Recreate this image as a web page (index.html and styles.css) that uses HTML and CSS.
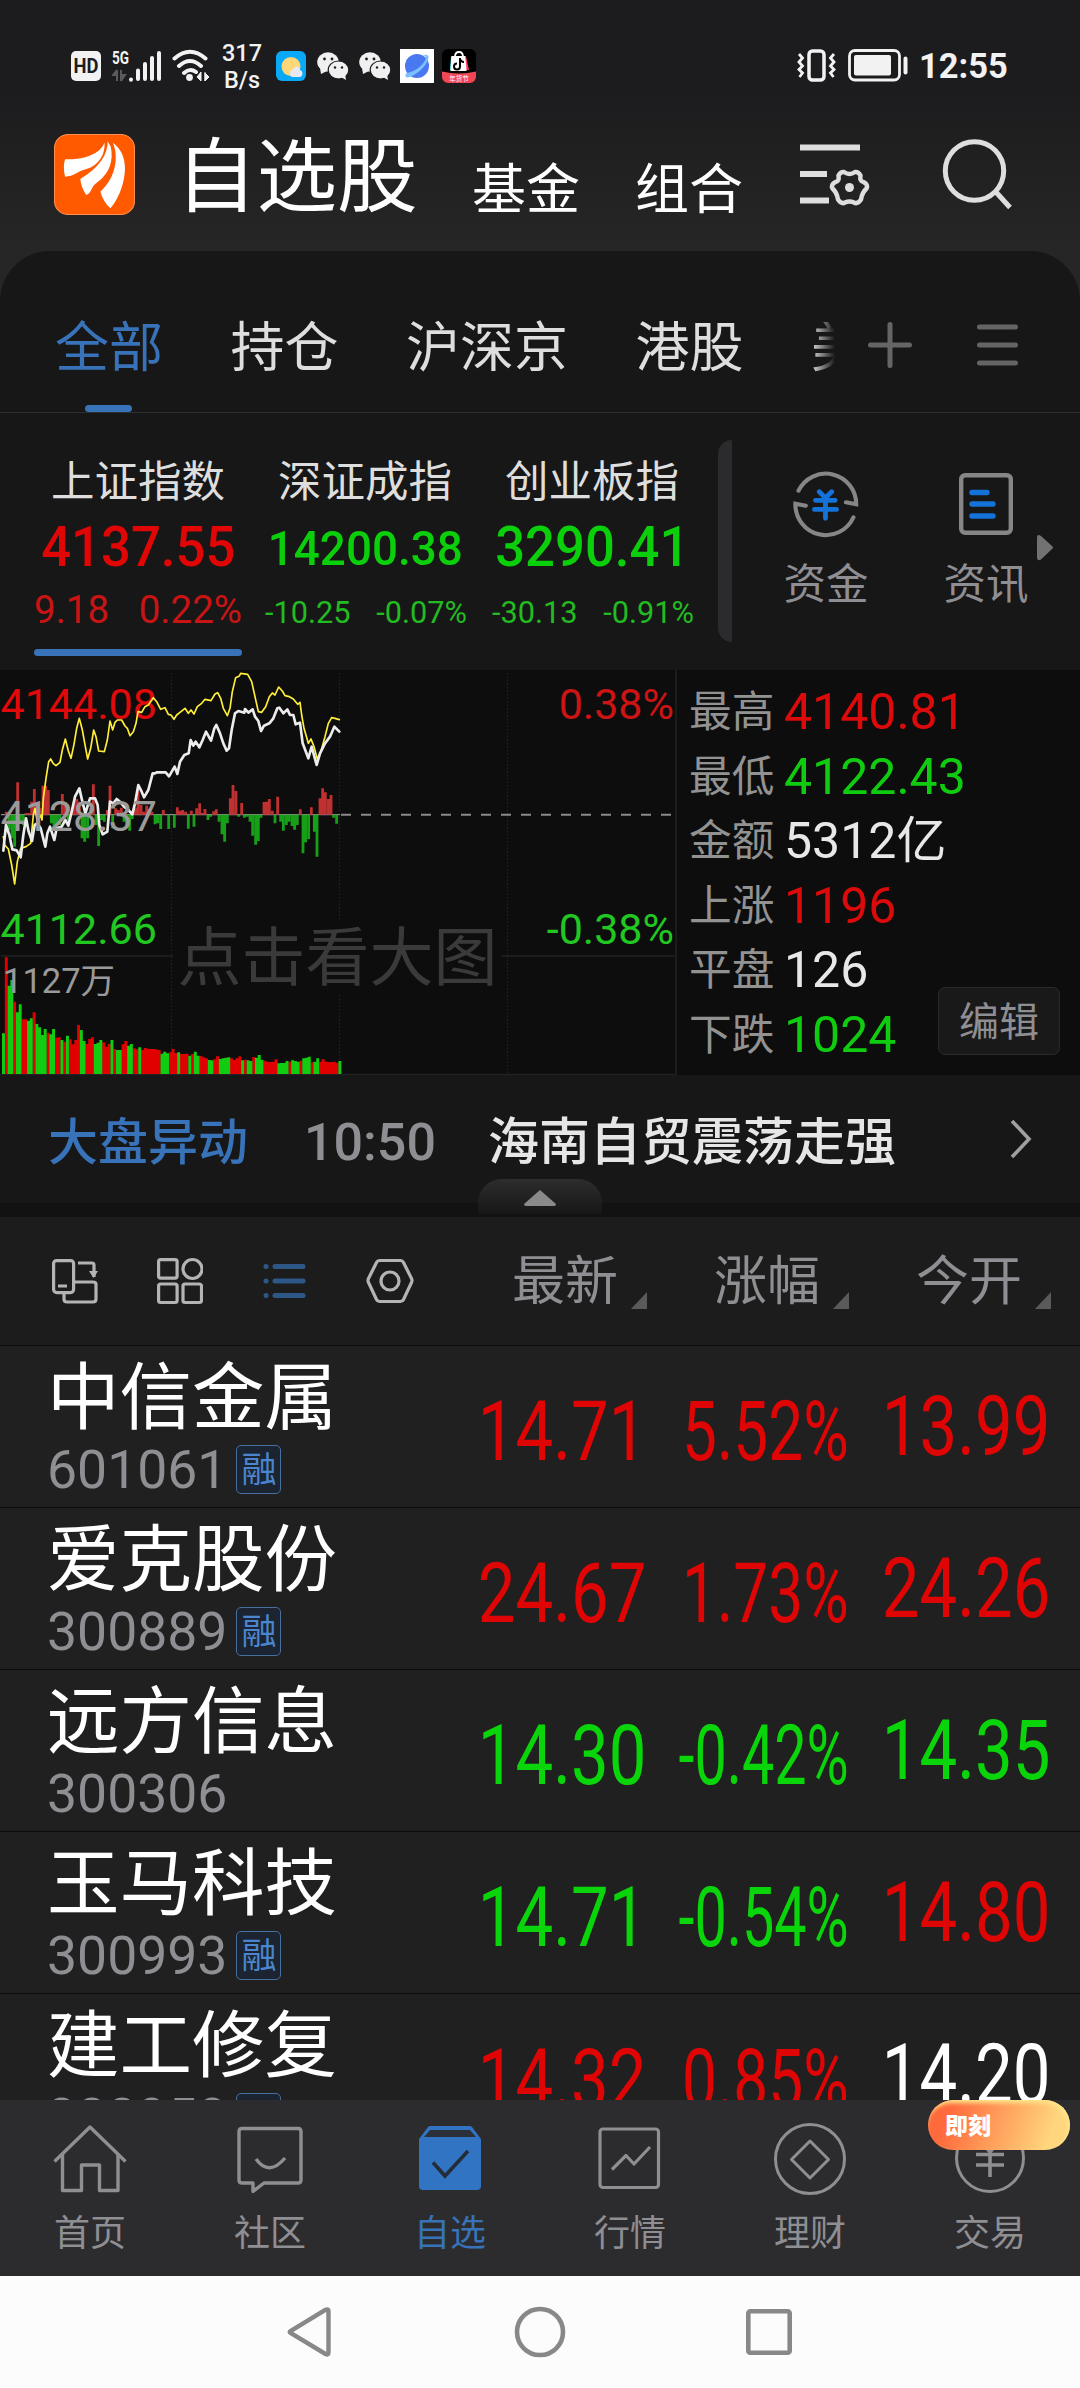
FILE: index.html
```html
<!DOCTYPE html>
<html lang="zh-CN">
<head>
<meta charset="utf-8">
<title>自选股</title>
<link rel="stylesheet" href="styles.css">
</head>
<body>
<div class="top">
  <div class="status">
    <svg class="s-hd" width="30" height="30" viewBox="0 0 30 30"><rect width="30" height="30" rx="5" fill="#f2f2f2"/><text x="15" y="22" font-size="19.5" font-weight="700" text-anchor="middle" fill="#1c1c1e" textLength="25" lengthAdjust="spacingAndGlyphs">HD</text></svg>
    <svg class="s-signal" width="50" height="32" viewBox="0 0 50 32"><text x="0" y="14" font-size="18.5" font-weight="700" fill="#f2f2f2" textLength="17" lengthAdjust="spacingAndGlyphs">5G</text><path d="M5 20v11M9 20v11M5 20l-4 5h4M9 31l4-6h-4" stroke="#5a5a5c" stroke-width="2" fill="#5a5a5c"/><g stroke="#f2f2f2" stroke-width="4" stroke-linecap="round"><path d="M19 29.5v0.2M26 20.500v8.500M33 14v15M40 8v21M47 3v26"/></g></svg>
    <svg class="s-wifi" width="38" height="33" viewBox="0 0 38 33"><g fill="none" stroke="#f2f2f2" stroke-width="4" stroke-linecap="round"><path d="M2.500 9.500Q18 -4 33.500 9.500M7 17Q18 7 29 17M12 24Q18 18.500 24 23"/></g><circle cx="17.500" cy="28.500" r="3.400" fill="#f2f2f2"/><path d="M29 23v9l-4-4zM33 23v9M33 32l4-4-4-4z" fill="#f2f2f2" stroke="#f2f2f2" stroke-width="1"/></svg>
    <div class="speed"><span>317</span><span>B/s</span></div>
    <svg class="s-weather" width="30" height="30" viewBox="0 0 30 30"><rect width="30" height="30" rx="6" fill="#0aa9f8"/><circle cx="15" cy="15.500" r="9.500" fill="#ffd778"/><path d="M16 26a4 4 0 0 1 0-7q5-7 8 0a3.700 3.700 0 0 1 0 7z" fill="#e6e9f2"/></svg>
    <svg class="s-wechat" width="32" height="28" viewBox="0 0 32 28"><g fill="#f0f0f0"><ellipse cx="11" cy="10" rx="10.800" ry="9.700"/><path d="M3 16l1 6 6-3z"/><ellipse cx="21.500" cy="18" rx="10.300" ry="9" stroke="#1c1c1e" stroke-width="1.200"/><path d="M24 25l5 3-1-6z"/></g><g fill="#1c1c1e"><circle cx="7.500" cy="7" r="1.400"/><circle cx="15" cy="7" r="1.400"/><circle cx="18" cy="15.500" r="1.200"/><circle cx="25" cy="15.500" r="1.200"/></g></svg>
    <svg class="s-wechat" width="32" height="28" viewBox="0 0 32 28"><g fill="#f0f0f0"><ellipse cx="11" cy="10" rx="10.800" ry="9.700"/><path d="M3 16l1 6 6-3z"/><ellipse cx="21.500" cy="18" rx="10.300" ry="9" stroke="#1c1c1e" stroke-width="1.200"/><path d="M24 25l5 3-1-6z"/></g><g fill="#1c1c1e"><circle cx="7.500" cy="7" r="1.400"/><circle cx="15" cy="7" r="1.400"/><circle cx="18" cy="15.500" r="1.200"/><circle cx="25" cy="15.500" r="1.200"/></g></svg>
    <svg class="s-browser" width="34" height="34" viewBox="0 0 34 34"><rect width="34" height="34" fill="#fff"/><circle cx="17" cy="17" r="12" fill="#4a78f0"/><path d="M6.500 24C4 28 6 29.500 11 27.500 19 24 27 16 28.500 9 29 5.500 26 5 22.500 6.500 26 6.500 26.500 8.500 25 11.500 21.500 18 14 23 6.500 24Z" fill="#7cc0ff"/></svg>
    <svg class="s-shop" width="34" height="34" viewBox="0 0 34 34"><rect width="34" height="34" rx="6" fill="#000"/><path d="M9 8l1-1v14H8z" fill="#2ee8e4"/><path d="M24 7l3 14h-4z" fill="#fe3a60"/><path d="M9.500 7h14l1 15H8.500z" fill="#fff"/><path d="M13 8q0-5 4-5t4 5" fill="none" stroke="#fff" stroke-width="1.800"/><path d="M18 9v8.500a3 3 0 1 1-3-3M18 10q1 3 4 3" stroke="#000" stroke-width="2" fill="none"/><path d="M0 22.500q17 4 34 0V28a6 6 0 0 1-6 6H6a6 6 0 0 1-6-6z" fill="#f04656"/><text x="17" y="32" font-size="6.500" fill="#fff" text-anchor="middle">年货节</text></svg>
    <svg class="s-vibrate" width="39" height="33" viewBox="0 0 39 33"><g fill="none" stroke="#f2f2f2"><rect x="12" y="2" width="15" height="29" rx="3.500" stroke-width="3.500"/><path stroke-width="2.800" d="M2 5l3.500 4-3.500 4 3.500 4-3.500 3.500 3.500 3.500-3 4M37 5l-3.500 4 3.500 4-3.500 4 3.500 3.500-3.500 3.500 3 4"/></g></svg>
    <svg class="s-battery" width="61" height="33" viewBox="0 0 61 33"><rect x="1.500" y="1.500" width="50" height="29.500" rx="5.500" fill="none" stroke="#f2f2f2" stroke-width="2.800"/><rect x="6" y="6" width="37" height="20.500" rx="2" fill="#f2f2f2"/><rect x="55.500" y="7.500" width="4" height="18" rx="2" fill="#f2f2f2"/></svg>
    <span class="clock">12:55</span>
  </div>
  <div class="header">
    <svg class="logo" width="81" height="81" viewBox="158 402 234 243" preserveAspectRatio="none"><rect x="159.500" y="403.500" width="231" height="240" rx="40" fill="#ff5a00" stroke="#ff8f50" stroke-width="3"/><g fill="#fff"><path d="M304 428C290 462 250 478 190 478Q183 500 190 530C215 530 228 513 250 508C290 494 306 462 304 428Z"/><path d="M313 424C314 462 290 502 234 537Q236 562 251 585C270 577 262 560 285 545C320 518 330 480 322 440Z"/><path d="M328 428C346 470 336 534 292 575Q300 605 321 625C350 590 363 540 363 505C363 470 350 445 328 428Z"/></g></svg>
    <h1>自选股</h1>
    <span class="sub sub-a">基金</span>
    <span class="sub sub-b">组合</span>
    <svg class="filter" width="70" height="66" viewBox="0 0 70 66"><g stroke="#dedede" stroke-width="6"><path d="M0 5.500h60M0 32h27M0 58.500h29"/></g><g transform="translate(49.500 45.500)"><path d="M-5.500 -15.500Q0 -11.500 5.500 -15.500 9 -16 11 -12 10 -6 14 -5.500 19 -3 17 1 12.500 5 11.500 12 8 17 4.500 15 0 13 -4.500 15 -8 17 -11.500 12 -12.500 5 -17 1 -19 -3 -14 -5.500 -10 -6 -11 -12 -9 -16 -5.500 -15.500Z" fill="none" stroke="#dedede" stroke-width="4.500" stroke-linejoin="round"/><circle r="4.500" fill="#dedede"/></g></svg>
    <svg class="search" width="72" height="72" viewBox="0 0 72 72"><g fill="none" stroke="#dedede"><circle cx="32.500" cy="32" r="29.200" stroke-width="5"/><path d="M53 52l15 16.500" stroke-width="5"/></g></svg>
  </div>
</div>
<main class="panel">
  <nav class="tabs">
    <span class="tab active">全部</span>
    <span class="tab">持仓</span>
    <span class="tab">沪深京</span>
    <span class="tab">港股</span>
    <span class="tab cut">美股</span>
    <svg class="plus" width="44" height="46" viewBox="0 0 44 46"><path d="M2.500 23h39M22 2.500v41" stroke="#656565" stroke-width="5" stroke-linecap="round"/></svg>
    <svg class="menu" width="41" height="42" viewBox="0 0 41 42"><path d="M2.500 3h36M2.500 21h36M2.500 39h36" stroke="#656565" stroke-width="5" stroke-linecap="round"/></svg>
  </nav>
  <section class="indices">
    <div class="index up chosen"><span class="iname">上证指数</span><span class="ival">4137.55</span><span class="ichg"><i>9.18</i><i>0.22%</i></span></div>
    <div class="index down"><span class="iname">深证成指</span><span class="ival small">14200.38</span><span class="ichg small"><i>-10.25</i><i>-0.07%</i></span></div>
    <div class="index down"><span class="iname">创业板指</span><span class="ival">3290.41</span><span class="ichg small"><i>-30.13</i><i>-0.91%</i></span></div>
    <div class="bar"></div>
    <div class="shortcut first"><svg width="66" height="68" viewBox="735 632 191 200" preserveAspectRatio="none"><g fill="none" stroke="#868686" stroke-width="12" stroke-linecap="round"><path d="M751 693A88 90 0 0 1 918 733L888 727M910 771A88 90 0 0 1 742 731L772 737"/></g><path d="M811 696l18 18 18-18M800 721h57M797 748h64M829 716v58" fill="none" stroke="#1572d8" stroke-width="14" stroke-linecap="round"/></svg><span>资金</span></div>
    <div class="shortcut"><svg width="54" height="68" viewBox="0 0 54 68"><rect x="2.200" y="5.200" width="49.600" height="57.600" rx="4" fill="none" stroke="#868686" stroke-width="4.400"/><path d="M13 22.500h15M13 34h21M13 46h21" stroke="#1572d8" stroke-width="5.400" stroke-linecap="round"/></svg><span>资讯</span><svg class="more" width="18" height="27" viewBox="0 0 18 27"><path d="M1 4q0-5 4-2l11 10q2 1.500 0 3L5 25.500q-4 2-4-2z" fill="#727272"/></svg></div>
  </section>
  <section class="market">
    <svg class="chart" width="675" height="405" viewBox="0 0 675 405">
      <g stroke="#242426" stroke-width="1.200" stroke-dasharray="1.500 2"><path d="M171.500 3V403M339.500 3V403M507.500 3V403"/></g>
      <path d="M1 286H675M0 404.500H675" stroke="#222224" stroke-width="1.700"/>
      <rect x="173" y="250" width="328" height="74" fill="#0d0d0d"/>
      <text x="177.500" y="309.500" font-size="64" fill="#3a3a3a">点击看大图</text>
      <g transform="translate(0 -5) scale(.333333)">
        <path d="M3 449H1020" stroke="#8a8a8a" stroke-width="4"/>
        <path d="M1023 449H2020" stroke="#8a8a8a" stroke-width="6" stroke-dasharray="30 30"/>
        <path id="barsUp" stroke="#c03030" stroke-width="8.500"/>
        <path id="barsDown" stroke="#17a017" stroke-width="8.500"/>
        <path id="volUp" stroke="#e00000" stroke-width="8.800"/>
        <path id="volDown" stroke="#12cc12" stroke-width="8.800"/>
      </g>
      <g font-size="43"><text x="0.500" y="49" fill="#e00a0a">4144.08</text><text x="0.500" y="274" fill="#22c822">4112.66</text><text x="674" y="49" fill="#cc1414" text-anchor="end">0.38%</text><text x="674" y="274" fill="#22c822" text-anchor="end">-0.38%</text></g>
      <text x="3" y="323" font-size="34.500" fill="#9a9a9a">1127万</text>
      <g transform="translate(0 -5) scale(.333333)" fill="none" stroke-linejoin="round" stroke-linecap="round">
        <polyline stroke="#ffef38" stroke-width="5" points="10,515 14,540 25,552 35,600 44,657 52,590 62,550 78,545 92,535 100,450 105,430 112,470 122,450 126,465 130,400 138,340 146,290 152,282 160,296 168,302 180,292 187,255 196,222 205,258 213,280 222,238 230,190 238,160 247,195 256,245 263,282 272,250 281,195 288,215 296,258 313,260 322,225 330,168 338,195 345,172 352,165 365,165 375,183 382,190 390,212 400,200 408,175 414,140 425,142 435,125 445,120 460,98 470,110 482,133 495,128 505,148 513,150 522,163 530,150 540,142 555,130 565,145 573,135 582,147 592,125 605,115 615,103 633,107 645,87 653,83 662,100 670,130 682,152 690,130 697,80 707,38 718,33 722,25 743,28 755,50 765,95 775,140 785,142 797,125 808,95 817,84 825,90 836,66 847,78 855,92 868,95 880,102 893,118 900,112 905,150 912,190 925,235 933,222 942,245 952,282 962,262 975,215 985,175 995,158 1005,160 1018,164"/>
        <polyline stroke="#ececec" stroke-width="8" points="10,557 18,480 28,510 37,553 50,556 62,577 70,510 78,460 86,500 96,528 104,480 112,475 122,490 136,545 142,505 150,485 163,525 170,490 185,485 196,465 205,482 215,440 225,395 238,370 246,405 256,445 270,400 285,400 293,420 298,480 308,508 322,500 330,410 340,415 350,402 360,410 372,425 385,435 397,448 405,415 415,360 425,380 432,397 445,375 458,325 465,325 470,322 497,322 507,334 524,305 532,327 540,290 553,270 566,265 572,225 580,242 587,230 598,247 608,225 618,200 633,227 643,190 649,180 660,205 670,235 680,257 687,250 695,195 705,145 715,138 733,143 735,132 745,143 758,133 765,155 775,168 783,198 792,182 808,175 820,160 832,130 838,128 850,145 862,133 870,150 880,150 887,178 900,173 908,235 925,280 935,245 950,300 960,265 975,235 990,215 1003,185 1018,200"/>
      </g>
      <text x="0.500" y="161" font-size="43" fill="#9a9a9a">4128.37</text>
    </svg>
    <div class="stats">
      <p><span>最高</span><b class="r">4140.81</b></p>
      <p><span>最低</span><b class="g">4122.43</b></p>
      <p><span>金额</span><b>5312亿</b></p>
      <p><span>上涨</span><b class="r">1196</b></p>
      <p><span>平盘</span><b>126</b></p>
      <p><span>下跌</span><b class="g">1024</b></p>
      <button class="edit">编辑</button>
    </div>
  </section>
  <section class="news">
    <span class="ntitle">大盘异动</span><span class="ntime">10:50</span><span class="ntext">海南自贸震荡走强</span>
    <svg class="chev" width="24" height="40" viewBox="0 0 24 40"><path d="M3 2l17 18L3 38" fill="none" stroke="#a0a0a0" stroke-width="3.600"/></svg>
    <div class="handle"><svg width="34" height="17" viewBox="0 0 34 17"><path d="M17 0L33 14q0 2-2 2H3q-2 0-2-2z" fill="#8a8a8a"/></svg></div>
  </section>
</main>
<div class="gap"></div>
<section class="tools">
  <svg class="t1" width="46" height="48" viewBox="0 0 46 48"><g fill="none" stroke="#b4b4b4" stroke-width="3.200"><rect x="1.600" y="3.600" width="20" height="32" rx="3"/><path d="M6 29h9M26 6h14q2 0 2 2v12M12 37v5q0 3 3 3h26q3 0 3-3V27q0-2-3-2H23"/></g><path d="M37 14h9l-4.500 7z" fill="#b4b4b4"/></svg>
  <svg class="t2" width="46" height="48" viewBox="0 0 46 48"><g fill="none" stroke="#b4b4b4" stroke-width="3.200"><rect x="1.600" y="2.600" width="18.500" height="18.500" rx="2"/><circle cx="35.500" cy="12" r="9.500"/><rect x="1.600" y="27" width="18.500" height="18.500" rx="2"/><rect x="26" y="27" width="18.500" height="18.500" rx="2"/></g></svg>
  <svg class="t3" width="43" height="48" viewBox="0 0 43 48"><path d="M12 9.500h28M12 24h28M12 38.500h28M3 9.500h.1M3 24h.1M3 38.500h.1" stroke="#2d5786" stroke-width="5" stroke-linecap="round"/></svg>
  <svg class="t4" width="48" height="48" viewBox="0 0 48 48"><g fill="none" stroke="#b4b4b4" stroke-width="3.200" stroke-linejoin="round"><path d="M13.500 3.500h21q2 0 3 2l8 16q1 2 0 4l-8 17q-1 2-3 2h-21q-2 0-3-2l-8-17q-1-2 0-4l8-16q1-2 3-2z"/><circle cx="24" cy="24" r="9"/></g></svg>
  <span class="th h1c">最新</span><span class="th">涨幅</span><span class="th">今开</span>
</section>
<section class="list">
  <div class="row up"><div class="who"><span class="name">中信金属</span><span class="code">601061<em>融</em></span></div><span class="num">14.71</span><span class="num pct">5.52%</span><span class="num open">13.99</span></div>
  <div class="row up"><div class="who"><span class="name">爱克股份</span><span class="code">300889<em>融</em></span></div><span class="num">24.67</span><span class="num pct">1.73%</span><span class="num open">24.26</span></div>
  <div class="row down"><div class="who"><span class="name">远方信息</span><span class="code">300306</span></div><span class="num">14.30</span><span class="num pct neg">-0.42%</span><span class="num open">14.35</span></div>
  <div class="row down"><div class="who"><span class="name">玉马科技</span><span class="code">300993<em>融</em></span></div><span class="num">14.71</span><span class="num pct neg">-0.54%</span><span class="num open rise">14.80</span></div>
  <div class="row up"><div class="who"><span class="name">建工修复</span><span class="code">300958<em>融</em></span></div><span class="num">14.32</span><span class="num pct">0.85%</span><span class="num open flat">14.20</span></div>
</section>
<nav class="bottom">
  <div class="item"><svg width="74" height="74" viewBox="0 0 74 74"><g fill="none" stroke="#8e8e93" stroke-width="3.400" stroke-linejoin="round"><path d="M1.500 38.500L37 4l35.500 34.500"/><path d="M9.500 31v36.500h19V42h18v25.500h18.500V31"/></g></svg><span>首页</span></div>
  <div class="item"><svg width="74" height="74" viewBox="0 0 74 74"><g fill="none" stroke="#8e8e93" stroke-width="3.400" stroke-linejoin="round"><path d="M9 5.500h56q3 0 3 3V57q0 3-3 3H31l-11 8.500V60H9q-3 0-3-3V8.500q0-3 3-3z"/><path d="M23 36q13 18 29-1"/></g></svg><span>社区</span></div>
  <div class="item on"><svg width="74" height="74" viewBox="0 0 74 74"><path d="M6 16L15 4q1-1 2-1h40q1 0 2 1l9 12v47q0 4-4 4H10q-4 0-4-4z" fill="#3174c4"/><path d="M11 14l6-7h40l6 7z" fill="#2c3038"/><path d="M20 39.500l12 13.500 23-25" fill="none" stroke="#242c38" stroke-width="3.600"/></svg><span>自选</span></div>
  <div class="item"><svg width="74" height="74" viewBox="0 0 74 74"><g fill="none" stroke="#8e8e93" stroke-width="3.200" stroke-linejoin="round"><rect x="7" y="6" width="58.500" height="58.500" rx="3"/><path d="M19 46.500l14-14 8 8.500 16-17"/></g></svg><span>行情</span></div>
  <div class="item"><svg width="74" height="74" viewBox="0 0 74 74"><g fill="none" stroke="#8e8e93" stroke-width="3" stroke-linejoin="round"><circle cx="37" cy="36" r="34.500"/><path d="M37 18l18.500 18.500L37 55 18.500 36.500z"/></g></svg><span>理财</span></div>
  <div class="item"><svg width="74" height="74" viewBox="0 0 74 74"><g fill="none" stroke="#8e8e93" stroke-width="3"><circle cx="37" cy="35" r="33.500"/><path d="M27 17l10 12 10-12M23 31.500h28M23 42h28M37 29v25" stroke-width="3.600"/></g></svg><span>交易</span><div class="promo">即刻</div></div>
</nav>
<nav class="system">
  <svg width="44" height="52" viewBox="0 0 44 52"><path d="M40 3.500q1.500 0 1.500 2v41q0 3-3 1.500L3.500 27q-1.500-1 0-2L38 4z" fill="none" stroke="#888" stroke-width="4.400"/></svg>
  <svg width="52" height="52" viewBox="0 0 52 52"><circle cx="26" cy="26" r="23" fill="none" stroke="#888" stroke-width="4.600"/></svg>
  <svg width="46" height="52" viewBox="0 0 46 52"><rect x="2.300" y="5.300" width="41.400" height="41.400" rx="2" fill="none" stroke="#888" stroke-width="4.600"/></svg>
</nav>
<script src="chart.js"></script>
</body>
</html>
```
FILE: chart.js
```js
// Volume bars: direction and top edge, one per minute.
const volume = "g1105 r877 g962 g945 r1010 g1042 g1018 r1063 r1063 g1067 g1060 r1042 g1077 g1087 g1110 g1092 r1103 g1108 g1092 r1118 r1117 g1125 r1130 g1112 r1123 r1138 r1125 r1080 g1095 g1128 r1137 r1122 r1117 g1137 g1133 g1125 r1132 r1145 r1137 g1125 r1152 g1155 g1155 r1138 r1128 g1142 g1137 r1150 r1153 g1147 r1155 r1149 r1151 r1152 r1152 r1153 r1155 g1166 g1160 g1165 r1162 r1152 r1164 g1162 r1167 r1167 r1166 g1172 r1167 g1160 g1172 r1173 r1177 r1180 g1185 g1186 r1183 r1174 g1182 g1180 g1178 g1177 r1180 r1185 r1180 r1174 g1186 r1184 g1186 g1188 r1176 g1178 g1170 g1184 r1187 r1190 r1191 r1190 r1183 g1195 g1194 g1194 g1188 r1190 g1186 g1188 g1190 r1187 g1180 g1178 g1175 r1192 g1190 g1180 r1190 r1183 r1190 r1191 r1191 r1190 r1193 g1188".split(" ");
let up = "", down = "";
volume.forEach((v, i) => {
  const seg = `M${10.500 + i * 8.340} 1227V${v.slice(1)}`;
  if (v[0] === "r") up += seg; else down += seg;
});
document.getElementById("volUp").setAttribute("d", up);
document.getElementById("volDown").setAttribute("d", down);

// Momentum bars around the zero line: x, end.
const zero = 449;
const momentum = [[19,440],[27,495],[36,520],[44,545],[53,352],[61,470],[70,480],[78,444],[86,444],[95,410],[103,372],[112,420],[120,430],[129,362],[137,362],[145,375],[154,475],[162,490],[170,485],[179,480],[187,387],[196,418],[204,470],[213,440],[221,415],[230,402],[238,410],[246,520],[254,530],[263,520],[271,430],[280,358],[288,480],[296,543],[305,465],[313,470],[322,435],[330,362],[338,490],[347,430],[355,435],[364,428],[372,470],[380,480],[389,497],[397,462],[406,430],[414,375],[423,420],[431,440],[440,422],[448,432],[456,440],[465,478],[473,475],[482,492],[490,435],[506,492],[523,488],[532,427],[540,437],[548,435],[557,440],[565,491],[574,437],[582,485],[590,430],[599,415],[607,444],[615,432],[624,465],[632,455],[641,439],[649,433],[657,470],[666,508],[674,530],[682,475],[691,400],[699,360],[708,378],[716,455],[725,414],[733,458],[741,455],[750,470],[758,512],[767,539],[775,528],[783,458],[792,411],[800,410],[808,402],[817,437],[825,475],[833,395],[842,470],[850,497],[859,480],[867,470],[876,483],[884,494],[892,480],[901,433],[909,565],[917,532],[926,522],[934,427],[943,500],[951,575],[960,400],[968,370],[976,382],[985,402],[993,390],[1001,458],[1010,476]];
let rise = "", fall = "";
momentum.forEach(([x, y]) => {
  if (y < zero) rise += `M${x} ${zero}V${y}`; else fall += `M${x} ${zero}V${y}`;
});
document.getElementById("barsUp").setAttribute("d", rise);
document.getElementById("barsDown").setAttribute("d", fall);
```
FILE: styles.css
```css
* { box-sizing: border-box; margin: 0; padding: 0; }
body {
  width: 1080px; height: 2388px; overflow: hidden;
  background: #262626; color: #fff;
  font-family: Roboto, "Noto Sans CJK SC", sans-serif;
}
svg { display: block; flex: none; }
span, b, i { flex: none; white-space: nowrap; font-style: normal; }

.top { height: 251px; background: linear-gradient(#1c1c1e 0, #1c1c1e 90px, #262626 250px); }

.status { display: flex; align-items: center; height: 132px; padding-left: 71px; }
.s-signal { margin-left: 11px; }
.s-wifi { margin: -2px 0 0 10px; }
.speed { display: flex; flex-direction: column; align-items: center; width: 40px; margin: 1px 0 0 12px; font-size: 23.5px; font-weight: 500; line-height: 27px; color: #f2f2f2; }
.s-weather { margin-left: 14px; }
.s-wechat { margin-left: 11px; }
.s-wechat + .s-wechat { margin-left: 10px; }
.s-browser { margin-left: 9px; }
.s-shop { margin-left: 8px; }
.s-vibrate { margin: -2px 0 0 321px; }
.s-battery { margin: -1px 0 0 12px; }
.clock { margin-left: 10px; font-size: 34.5px; font-weight: 700; color: #f2f2f2; }

.header { display: flex; align-items: flex-start; height: 119px; padding-left: 54px; }
.logo { margin-top: 2px; }
h1 { margin: 6px 0 0 41px; width: 242px; font-size: 80.5px; line-height: 80px; font-weight: 400; white-space: nowrap; }
.sub { margin-top: 32px; width: 108px; font-size: 54px; line-height: 54px; }
.sub-a { margin-left: 54px; }
.sub-b { margin-left: 55px; }
.filter { margin: 10px 0 0 57px; }
.search { margin: 7px 0 0 72px; }

.panel { height: 952px; background: #171717; border-radius: 50px 50px 0 0; }
.tabs { display: flex; align-items: center; height: 162px; padding: 34px 0 0 55px; border-bottom: 1px solid #2e2e2e; color: #dedede; }
.tab { position: relative; margin-right: 67.5px; font-size: 54px; line-height: 54px; }
.tab.active { color: #3872b8; }
.tab.active::after { content: ""; position: absolute; left: 30px; bottom: -36px; width: 47px; height: 7px; border-radius: 4px; background: #3872b8; }
.tab.cut { width: 24px; overflow: hidden; margin-right: 33px; -webkit-mask-image: linear-gradient(90deg, #000 0, transparent 100%); mask-image: linear-gradient(90deg, #000 0, transparent 100%); }
.plus { margin-top: -8px; }
.menu { margin: -8px 0 0 65px; }

.indices { display: flex; align-items: flex-start; height: 257px; padding-left: 34px; }
.index { position: relative; display: flex; flex-direction: column; align-items: center; width: 208px; height: 243px; margin-right: 19px; padding-top: 48px; }
.index.up { color: #e00606; }
.index.down { color: #0ccf0c; }
.index.chosen::after { content: ""; position: absolute; left: 0; bottom: 0; width: 208px; height: 7px; border-radius: 4px; background: #3872b8; }
.iname { font-size: 43.5px; line-height: 44px; color: #dedede; }
.ival { margin-top: 14px; font-size: 56px; line-height: 56px; font-weight: 500; transform: scaleX(.94); }
.ival.small { font-size: 49px; padding-top: 2px; height: 56px; transform: scaleX(.935); }
.ichg { display: flex; justify-content: space-between; width: 208px; margin-top: 15px; font-size: 38.5px; line-height: 40px; }
.up .ichg { color: #c81414; }
.down .ichg { color: #22bb22; }
.ichg.small { width: 202px; margin-left: 2px; font-size: 30.7px; padding-top: 3px; }
.bar { width: 14px; height: 202px; margin: 27px 0 0 3px; border-radius: 14px 0 0 14px; background: #2b2b2d; }
.shortcut { position: relative; display: flex; flex-direction: column; align-items: center; width: 160px; padding-top: 57px; font-size: 42.5px; line-height: 44px; color: #8e8e93; }
.shortcut.first { margin-left: 14px; }
.shortcut span { margin-top: 25px; }
.more { position: absolute; left: 130px; top: 121px; }

.market { display: flex; height: 405px; background: #0d0d0d; }
.stats { position: relative; flex: 1; padding: 10px 0 0 12px; border-left: 2px solid #1c1c1d; }
.stats p { display: flex; align-items: center; height: 64.5px; }
.stats span { width: 95px; font-size: 42.7px; line-height: 50px; color: #929292; }
.stats b { font-size: 50px; line-height: 50px; font-weight: 400; color: #e8e8e8; }
.stats b.r { color: #dc0a0a; }
.stats b.g { color: #10cc10; }
.edit { position: absolute; left: 261px; top: 317px; width: 122px; height: 68px; padding-top: 4px; border: 1px solid #2a2a2b; border-radius: 7px; background: #191919; color: #8e8e93; font: 40px/60px Roboto, "Noto Sans CJK SC", sans-serif; }

.news { position: relative; display: flex; align-items: center; height: 128px; padding: 8px 0 0 48px; font-weight: 500; font-size: 50px; line-height: 56px; }
.ntitle { width: 256px; color: #3872b8; }
.ntime { width: 184px; color: #8e8e93; font-size: 52px; }
.ntext { width: 521px; color: #e6e6e6; font-size: 51px; }
.chev { margin-top: -8px; }
.handle { position: absolute; left: 478px; top: 104px; width: 124px; height: 35px; padding: 11px 45px; border-radius: 24px 24px 0 0; background: linear-gradient(#2d2d2d, #171717); }

.gap { height: 14px; background: #121212; }
.tools { display: flex; align-items: center; height: 129px; padding-left: 52px; background: #1c1c1c; border-bottom: 1px solid #0c0c0c; }
.t2 { margin-left: 59px; }
.t3 { margin-left: 60px; }
.t4 { margin-left: 60px; }
.th { position: relative; width: 202px; font-size: 53px; line-height: 54px; color: #8e8e93; padding-top: 2px; }
.th.h1c { margin-left: 98px; }
.th::after { content: ""; position: absolute; left: 119px; top: 39px; width: 16px; height: 17px; background: #5a5a5c; clip-path: polygon(100% 0, 100% 100%, 0 100%); }

.list { height: 754px; overflow: hidden; background: #202020; }
.row { display: grid; grid-template-columns: 446px 200px 203px 201px; height: 162px; border-bottom: 1px solid #0c0c0c; }
.who { display: flex; flex-direction: column; padding: 17px 0 0 47px; }
.name { font-size: 72.5px; line-height: 72px; }
.code { display: flex; align-items: center; margin-top: 10px; height: 50px; font-size: 53.5px; line-height: 50px; color: #8e8e93; }
.code em { width: 45px; height: 49px; margin: -1px 0 0 9px; border: 1px solid #47709f; border-radius: 5px; background: #1b2430; color: #4a86cf; font-size: 35px; font-style: normal; line-height: 49px; text-align: center; }
.num { justify-self: end; padding-top: 9px; font-size: 83.4px; line-height: 154px; transform: scaleX(.805); transform-origin: 100% 50%; }
.num.pct { transform: scaleX(.745); }
.num.neg { transform: scaleX(.69); }
.num.open { padding-top: 0; line-height: 162px; }
.row.up .num, .row .num.rise { color: #e00505; }
.row.down .num { color: #0ad40a; }
.row.down .num.rise { color: #e00505; }
.row.up .num.flat { color: #fff; }

.bottom { display: flex; height: 176px; background: #2c2c2e; }
.item { position: relative; display: flex; flex-direction: column; align-items: center; width: 180px; padding-top: 23px; font-size: 36px; line-height: 40px; color: #8e8e93; }
.item span { margin-top: 17px; }
.item.on { color: #3872b8; }
.promo { position: absolute; left: 28px; top: 0; width: 142px; height: 50px; padding: 0 17px; border-radius: 25px; background: linear-gradient(110deg, #ff6a3c 15%, #ffa05c 50%, #ffd67e 85%); box-shadow: inset -2px 3px 4px #ffe68c; color: #fff; font-size: 23px; font-weight: 900; line-height: 53px; }

.system { display: flex; align-items: center; height: 112px; padding-left: 287px; background: #fcfcfc; }
.system svg + svg { margin-left: 183px; }
.system svg + svg + svg { margin-left: 180px; }
```
